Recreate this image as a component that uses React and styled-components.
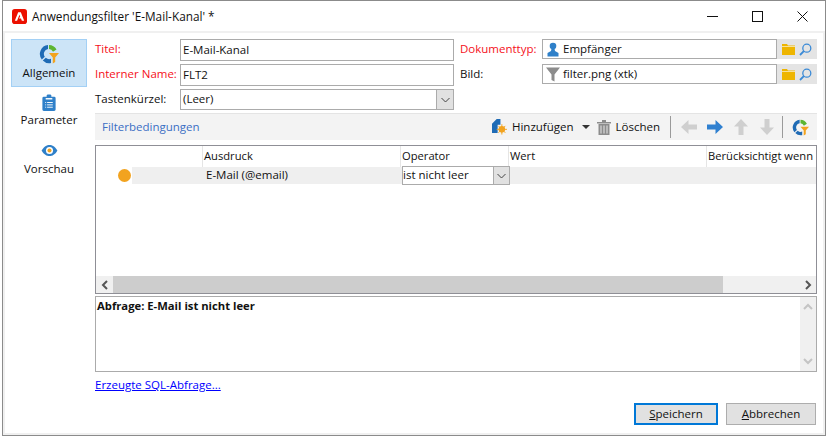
import styled, { createGlobalStyle } from "styled-components";

const GlobalStyle = createGlobalStyle`
    html, body {
        margin: 0;
        padding: 0;
        background: #fff;
    }
    body {
        font-family: "Open Sans", "Liberation Sans", sans-serif;
        font-size: 11.5px;
        color: #111;
    }
`;

const columns = [
    { label: "", width: 107 },
    { label: "Ausdruck", width: 198 },
    { label: "Operator", width: 108 },
    { label: "Wert", width: 198 },
    { label: "Berücksichtigt wenn", width: 110 },
];

// Icons
const AdobeLogo = () => (
    <svg width="15" height="15" viewBox="0 0 16 16">
        <rect width="16" height="16" rx="3" fill="#eb1000" />
        <path d="M6.6 3.5h2.8L13 12.5h-2.5l-.9-2.5H7.4l1.3-2L8 6l-2.6 6.5H3z" fill="#fff" />
    </svg>
);

const FilterRing = ({ size = 20 }) => (
    <svg width={size} height={size} viewBox="0 0 20 20">
        <path d="M9 1A9 9 0 0 0 2.800 15.500L5.800 12.800A5 5 0 0 1 9 5z" fill="#1f6bb5" />
        <path d="M10 1a9 9 0 0 1 7.500 4.500L14 7.800A5 5 0 0 0 10 5z" fill="#5cb531" />
        <path d="M3.800 16.400A9 9 0 0 0 12 19v-4.200A5 5 0 0 1 6.800 13.700z" fill="#1f6bb5" />
        <path d="M10 9h10l-3.800 4.600V18l-2.400 1.500v-5.900z" fill="#f2a31f" />
    </svg>
);

const ClipboardIcon = () => (
    <svg width="14" height="17" viewBox="0 0 14 18">
        <path d="M1.500 3H4.500V1.800C4.500 1 5 .5 7 .5S9.500 1 9.500 1.800V3H12.500A1.500 1.500 0 0 1 14 4.500V16.500A1.500 1.500 0 0 1 12.500 18H1.500A1.500 1.500 0 0 1 0 16.500V4.500A1.500 1.500 0 0 1 1.500 3Z" fill="#2f80c9" />
        <path d="M5 9h6M5 11.500h6M5 14h6M3 9h1M3 11.500h1M3 14h1" stroke="#fff" strokeWidth="1" />
        <rect x="3.500" y="4.300" width="7" height="1.500" fill="#fff" />
    </svg>
);

const EyeIcon = () => (
    <svg width="17" height="13" viewBox="0 0 18 14">
        <path d="M0.500 7C3 2.500 6 1 9 1s6 1.500 8.500 6C15 11.500 12 13 9 13S3 11.500 0.500 7Z" fill="#2f80c9" />
        <circle cx="9" cy="7" r="3.800" fill="#fff" />
        <circle cx="9" cy="7" r="2.200" fill="#f2a31f" />
    </svg>
);

const PersonIcon = () => (
    <svg width="12" height="15" viewBox="0 0 12 15">
        <circle cx="6" cy="4" r="3.300" fill="#2f80c9" />
        <path d="M4.500 6.500h3L8 9l3.500 2v3.500H.5V11L4 9z" fill="#2f80c9" />
    </svg>
);

const FunnelIcon = () => (
    <svg width="14" height="15" viewBox="0 0 14 15">
        <path d="M0 .5h14L8.500 7.500v7L5.500 13V7.500z" fill="#8c8c8c" />
    </svg>
);

const FolderIcon = () => (
    <svg width="13" height="11" viewBox="0 0 13 11">
        <path d="M0 0h5l1 1.500h7V11H0z" fill="#eeb500" />
        <path d="M0 2.500h13" stroke="#fff" strokeWidth=".6" />
    </svg>
);

const SearchIcon = () => (
    <svg width="13" height="13" viewBox="0 0 13 13">
        <circle cx="7.800" cy="5.200" r="4" fill="none" stroke="#3b8ad6" strokeWidth="1.300" />
        <path d="M4.800 8.200L1 12" stroke="#3b8ad6" strokeWidth="1.800" />
    </svg>
);

const AddIcon = () => (
    <svg width="15" height="16" viewBox="0 0 16 17">
        <path d="M0 5l5-5h4v6H6v9H0z" fill="#1f6bb5" />
        <circle cx="10.500" cy="11" r="3.500" fill="#f2a31f" />
        <path d="M10.500 5.500v11M5 11h11M6.800 7.300l7.400 7.400M14.200 7.300l-7.400 7.400" stroke="#f2a31f" strokeWidth="1" />
    </svg>
);

const TrashIcon = () => (
    <svg width="14" height="16" viewBox="0 0 14 16">
        <path d="M0 3h14v1.500H0zM5 1h4v2H5z" fill="#8c8c8c" />
        <path d="M1.500 5h11v11h-11z" fill="#8c8c8c" />
        <path d="M4 6.500v8M7 6.500v8M10 6.500v8" stroke="#e8e8e8" strokeWidth="1" />
    </svg>
);

const Arrow = ({ rotate, color }) => (
    <svg width="16" height="14" viewBox="0 0 16 14" style={{ transform: `rotate(${rotate}deg)` }}>
        <path d="M0 4.500h8.500V0L16 7l-7.500 7V9.500H0z" fill={color} />
    </svg>
);

const ChevronDown = () => (
    <svg width="9" height="6" viewBox="0 0 9 6">
        <path d="M.5 1L4.500 5 8.500 1" fill="none" stroke="#444" strokeWidth="1" />
    </svg>
);

const ScrollChevron = ({ rotate, color }) => (
    <svg width="8" height="10" viewBox="0 0 8 10" style={{ transform: `rotate(${rotate}deg)` }}>
        <path d="M6 1L2 5l4 4" fill="none" stroke={color} strokeWidth="2" />
    </svg>
);

const App = () => {
    return (
        <>
            <GlobalStyle />
            <Window>
                <TitleBar>
                    <AdobeLogo />
                    <TitleText>Anwendungsfilter 'E-Mail-Kanal' *</TitleText>
                    <WindowButtons>
                        <WindowButton>
                            <svg width="11" height="11" viewBox="0 0 11 11"><path d="M0 5.500h11" stroke="#111" /></svg>
                        </WindowButton>
                        <WindowButton>
                            <svg width="11" height="11" viewBox="0 0 11 11"><rect x=".5" y=".5" width="10" height="10" fill="none" stroke="#111" /></svg>
                        </WindowButton>
                        <WindowButton>
                            <svg width="11" height="11" viewBox="0 0 11 11"><path d="M.5.5l10 10M10.500.5l-10 10" stroke="#111" /></svg>
                        </WindowButton>
                    </WindowButtons>
                </TitleBar>

                <Body>
                    <Sidebar>
                        <NavItem $active>
                            <FilterRing />
                            <span>Allgemein</span>
                        </NavItem>
                        <NavItem>
                            <ClipboardIcon />
                            <span>Parameter</span>
                        </NavItem>
                        <NavItem $tall>
                            <EyeIcon />
                            <span>Vorschau</span>
                        </NavItem>
                    </Sidebar>

                    <Main>
                        <Form>
                            <Label $required>Titel:</Label>
                            <Field>E-Mail-Kanal</Field>
                            <Label $required>Dokumenttyp:</Label>
                            <LinkField>
                                <LinkValue><IconSlot><PersonIcon /></IconSlot><span>Empfänger</span></LinkValue>
                                <LinkButtons><FolderIcon /><SearchIcon /></LinkButtons>
                            </LinkField>

                            <Label $required>Interner Name:</Label>
                            <Field>FLT2</Field>
                            <Label>Bild:</Label>
                            <LinkField>
                                <LinkValue><IconSlot><FunnelIcon /></IconSlot><span>filter.png (xtk)</span></LinkValue>
                                <LinkButtons><FolderIcon /><SearchIcon /></LinkButtons>
                            </LinkField>

                            <Label>Tastenkürzel:</Label>
                            <ComboField>
                                <span>(Leer)</span>
                                <ComboButton><ChevronDown /></ComboButton>
                            </ComboField>
                        </Form>

                        <Toolbar>
                            <ToolbarTitle>Filterbedingungen</ToolbarTitle>
                            <ToolButton><AddIcon /><ToolLabel>Hinzufügen</ToolLabel></ToolButton>
                            <Caret />
                            <ToolButton><TrashIcon /><ToolLabel>Löschen</ToolLabel></ToolButton>
                            <ToolSeparator />
                            <ArrowGroup>
                                <Arrow rotate={180} color="#cfcfcf" />
                                <Arrow rotate={0} color="#2f80d0" />
                                <Arrow rotate={-90} color="#cfcfcf" />
                                <Arrow rotate={90} color="#cfcfcf" />
                            </ArrowGroup>
                            <ToolSeparator $tight />
                            <FilterRing size={17} />
                        </Toolbar>

                        <Grid>
                            <HeaderRow>
                                {columns.map((col) => (
                                    <HeaderCell key={col.label} $width={col.width}>{col.label}</HeaderCell>
                                ))}
                            </HeaderRow>
                            <DataRow>
                                <StatusCell><StatusDot /></StatusCell>
                                <ExpressionCell>E-Mail (@email)</ExpressionCell>
                                <OperatorCombo>
                                    <span>ist nicht leer</span>
                                    <OperatorButton><ChevronDown /></OperatorButton>
                                </OperatorCombo>
                            </DataRow>
                            <GridFill />
                            <HScroll>
                                <ScrollButton><ScrollChevron rotate={0} color="#555" /></ScrollButton>
                                <ScrollThumb />
                                <ScrollTrack />
                                <ScrollButton><ScrollChevron rotate={180} color="#555" /></ScrollButton>
                            </HScroll>
                        </Grid>

                        <QueryBox>
                            <QueryText>Abfrage: E-Mail ist nicht leer</QueryText>
                            <VScroll>
                                <ScrollChevron rotate={90} color="#c4c4c4" />
                                <ScrollChevron rotate={-90} color="#c4c4c4" />
                            </VScroll>
                        </QueryBox>

                        <SqlLink href="#">Erzeugte SQL-Abfrage...</SqlLink>

                        <Footer>
                            <Button $primary><span><u>S</u>peichern</span></Button>
                            <Button><span><u>A</u>bbrechen</span></Button>
                        </Footer>
                    </Main>
                </Body>
            </Window>
        </>
    );
};

const Window = styled.div`
    box-sizing: border-box;
    width: 824px;
    height: 436px;
    margin-left: 2px;
    background: #fff;
    border: 1px solid #8b8b8b;
    display: flex;
    flex-direction: column;
`;

const TitleBar = styled.div`
    height: 30px;
    flex: none;
    display: flex;
    align-items: center;
    padding-left: 9px;
`;

const TitleText = styled.div`
    margin-left: 5px;
    padding-bottom: 1px;
    font-size: 11.8px;
`;

const WindowButtons = styled.div`
    margin-left: auto;
    display: flex;
`;

const WindowButton = styled.div`
    width: 45px;
    height: 30px;
    display: flex;
    align-items: center;
    justify-content: center;
`;

const Body = styled.div`
    flex: 1;
    display: flex;
    min-height: 0;
    border: 2px solid #f0f0f0;
`;

const Sidebar = styled.div`
    width: 76px;
    margin-left: 6px;
    padding-top: 6px;
    display: flex;
    flex-direction: column;
`;

const NavItem = styled.div`
    box-sizing: border-box;
    height: ${(p) => (p.$tall ? "52px" : "48px")};
    display: flex;
    flex-direction: column;
    align-items: center;
    justify-content: center;
    gap: ${(p) => (p.$tall ? "4px" : "1px")};
    padding-bottom: 1px;
    background: ${(p) => (p.$active ? "#cce4f7" : "transparent")};
    border: 1px solid ${(p) => (p.$active ? "#a3d0f5" : "transparent")};
    line-height: 16px;
`;

const Main = styled.div`
    flex: 1;
    margin: 6px 6px 0 8px;
    display: flex;
    flex-direction: column;
    min-width: 0;
`;

const Form = styled.div`
    display: grid;
    grid-template-columns: 85px 280px 82px 275px;
    grid-template-rows: 22px 22px 21px;
    row-gap: 3px;
    align-items: center;
`;

const Label = styled.div`
    color: ${(p) => (p.$required ? "#f5101a" : "#111")};
    padding-bottom: 3px;
    white-space: nowrap;
`;

const Field = styled.div`
    box-sizing: border-box;
    height: 100%;
    margin-right: 6px;
    border: 1px solid #ababab;
    padding: 0 2px 2px;
    display: flex;
    align-items: center;
`;

const LinkField = styled.div`
    height: 20px;
    align-self: start;
    display: flex;
    justify-content: space-between;
`;

const LinkValue = styled.div`
    box-sizing: border-box;
    flex: 1;
    border: 1px solid #ababab;
    display: flex;
    align-items: center;
    gap: 3px;
    padding-left: 3px;
    & span {
        padding-bottom: 2px;
    }
`;

const IconSlot = styled.div`
    width: 14px;
    display: flex;
    justify-content: center;
`;

const LinkButtons = styled.div`
    width: 40px;
    background: #e4e4e4;
    display: flex;
    align-items: center;
    justify-content: space-evenly;
`;

const ComboField = styled(Field)`
    justify-content: space-between;
    padding: 0 0 0 2px;
    & span {
        padding-bottom: 2px;
    }
`;

const ComboButton = styled.div`
    width: 16px;
    height: 100%;
    background: #e1e1e1;
    border-left: 1px solid #ababab;
    display: flex;
    align-items: center;
    justify-content: center;
`;

const Toolbar = styled.div`
    margin-top: 3px;
    height: 27px;
    flex: none;
    background: #f3f3f3;
    border-top: 1px solid #e4e4e4;
    box-sizing: border-box;
    display: flex;
    align-items: center;
    padding: 0 8px 0 7px;
`;

const ToolbarTitle = styled.div`
    color: #3b6fc4;
    margin-right: auto;
    padding-bottom: 2px;
`;

const ToolButton = styled.div`
    display: flex;
    align-items: center;
    gap: 5px;
`;

const ToolLabel = styled.span`
    padding-bottom: 2px;
`;

const Caret = styled.div`
    width: 0;
    height: 0;
    margin: 0 7px 0 8px;
    border-left: 4px solid transparent;
    border-right: 4px solid transparent;
    border-top: 4px solid #333;
`;

const ToolSeparator = styled.div`
    width: 1px;
    height: 22px;
    background: #9a9a9a;
    margin: ${(p) => (p.$tight ? "0 9px 0 7px" : "0 10px")};
`;

const ArrowGroup = styled.div`
    display: flex;
    gap: 10px;
`;

const Grid = styled.div`
    box-sizing: border-box;
    margin-top: 5px;
    height: 149px;
    flex: none;
    border: 1px solid #8f8f96;
    display: flex;
    flex-direction: column;
    overflow: hidden;
`;

const HeaderRow = styled.div`
    height: 21px;
    flex: none;
    display: flex;
    box-sizing: border-box;
    font-size: 11.2px;
`;

const HeaderCell = styled.div`
    box-sizing: border-box;
    width: ${(p) => p.$width}px;
    flex: none;
    padding-left: 1px;
    white-space: nowrap;
    border-right: 1px solid #e5e5e5;
    line-height: 20px;
`;

const DataRow = styled.div`
    height: 17px;
    flex: none;
    display: flex;
    align-items: stretch;
    background: linear-gradient(to right, #fff 36px, #efefef 36px);
`;

const StatusCell = styled.div`
    width: 36px;
    flex: none;
    display: flex;
    align-items: center;
    justify-content: flex-end;
`;

const StatusDot = styled.div`
    width: 13px;
    height: 13px;
    border-radius: 50%;
    background: #f2a31f;
    margin-right: 1px;
`;

const ExpressionCell = styled.div`
    width: 270px;
    flex: none;
    box-sizing: border-box;
    padding-left: 74px;
    line-height: 15px;
`;

const OperatorCombo = styled.div`
    box-sizing: border-box;
    width: 108px;
    height: 19px;
    margin-top: -1px;
    border: 1px solid #ababab;
    background: #fff;
    display: flex;
    align-items: center;
    justify-content: space-between;
    & span {
        padding-bottom: 2px;
    }
`;

const OperatorButton = styled(ComboButton)`
    width: 15px;
`;

const GridFill = styled.div`
    flex: 1;
`;

const HScroll = styled.div`
    height: 17px;
    flex: none;
    display: flex;
    background: #f0f0f0;
`;

const ScrollButton = styled.div`
    width: 17px;
    display: flex;
    align-items: center;
    justify-content: center;
`;

const ScrollThumb = styled.div`
    width: 610px;
    background: #cdcdcd;
`;

const ScrollTrack = styled.div`
    flex: 1;
`;

const QueryBox = styled.div`
    box-sizing: border-box;
    margin-top: 2px;
    height: 76px;
    flex: none;
    border: 1px solid #ababab;
    display: flex;
    justify-content: space-between;
`;

const QueryText = styled.div`
    font-weight: 700;
    font-size: 11.25px;
    padding: 1px 1px 0;
`;

const VScroll = styled.div`
    width: 16px;
    background: #f0f0f0;
    display: flex;
    flex-direction: column;
    align-items: center;
    justify-content: space-between;
    padding: 5px 0;
    box-sizing: border-box;
`;

const SqlLink = styled.a`
    align-self: flex-start;
    margin-top: 5px;
    color: #0000ff;
    text-decoration: underline;
`;

const Footer = styled.div`
    margin-top: 11px;
    padding-right: 1px;
    display: flex;
    justify-content: flex-end;
    gap: 8px;
`;

const Button = styled.div`
    box-sizing: border-box;
    width: ${(p) => (p.$primary ? "84px" : "90px")};
    height: 22px;
    background: #e1e1e1;
    border: ${(p) => (p.$primary ? "2px solid #0078d7" : "1px solid #adadad")};
    display: flex;
    align-items: center;
    justify-content: center;
    & span {
        padding-bottom: 2px;
    }
`;

export default App;
